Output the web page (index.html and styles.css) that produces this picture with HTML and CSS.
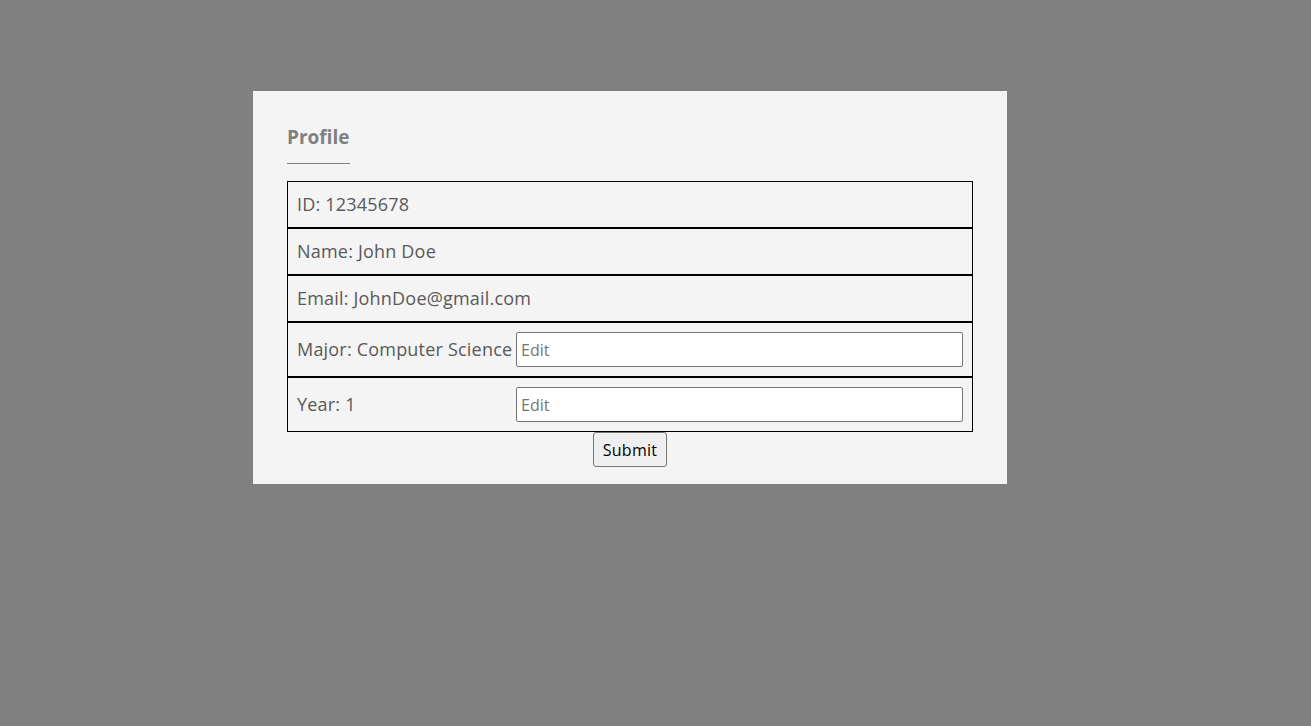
FILE: index.html
```html
<!DOCTYPE html>
<html>
<head>
<meta charset="utf-8">
<link rel="stylesheet" href="styles.css">
</head>
<body>
<div class="card">
  <h2 class="title">Profile</h2>
  <div class="rows">
    <div class="row"><span class="label">ID: 12345678</span></div>
    <div class="row"><span class="label">Name: John Doe</span></div>
    <div class="row"><span class="label">Email: JohnDoe@gmail.com</span></div>
    <div class="row row-edit"><span class="label fixed">Major: Computer Science</span><input class="edit" type="text" placeholder="Edit"></div>
    <div class="row row-edit"><span class="label fixed">Year: 1</span><input class="edit" type="text" placeholder="Edit"></div>
  </div>
  <div class="actions"><button class="submit" type="button">Submit</button></div>
</div>
</body>
</html>
```
FILE: styles.css
```css
html, body {
  margin: 0;
  padding: 0;
  background: #808080;
  height: 100%;
}
body {
  padding-top: 91px;
  box-sizing: border-box;
  font-family: "Open Sans", sans-serif;
}
.card {
  width: 754px;
  margin-left: 253px;
  box-sizing: border-box;
  background: #f4f4f4;
  padding: 27px 34px 17px;
}
.title {
  display: inline-block;
  margin: 0 0 17px;
  font-family: "Open Sans", sans-serif;
  font-size: 19px;
  font-weight: 700;
  color: #808080;
  line-height: 38px;
  border-bottom: 1px solid #808080;
  padding-bottom: 7px;
}
.rows {
  display: flex;
  flex-direction: column;
}
.row {
  display: flex;
  align-items: center;
  border: 1px solid #000;
  height: 47px;
  box-sizing: border-box;
  padding: 0 9px;
}
.row-edit {
  height: 55px;
}
.label {
  font-size: 18px;
  font-weight: 500;
  letter-spacing: 0.2px;
  color: #595959;
  line-height: 24px;
  margin-top: -2px;
}
.fixed {
  flex: none;
  width: 219px;
  white-space: nowrap;
}
.edit {
  flex: 1;
  height: 35px;
  box-sizing: border-box;
  border: 1px solid #767676;
  border-radius: 2px;
  background: #fff;
  font-family: "Open Sans", sans-serif;
  font-size: 16px;
  padding: 0 4px;
  margin: 0;
}
.edit::placeholder {
  color: #757575;
}
.actions {
  display: flex;
  justify-content: center;
}
.submit {
  width: 74px;
  height: 35px;
  font-family: "Open Sans", sans-serif;
  font-size: 16px;
  letter-spacing: 0.3px;
  color: #000;
  background: #efefef;
  border: 1px solid #767676;
  border-radius: 3px;
  padding: 0;
}
```
